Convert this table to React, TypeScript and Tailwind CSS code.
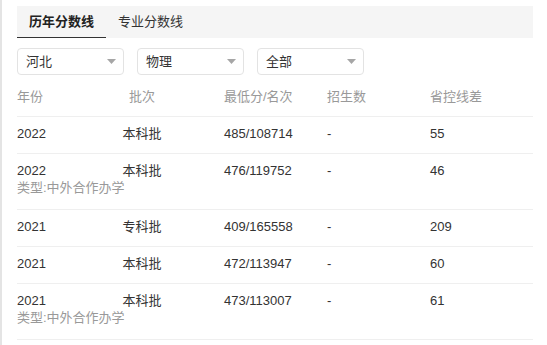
import React from 'react'

const rows = [
  { year: '2022', batch: '本科批', score: '485/108714', plan: '-', diff: '55' },
  { year: '2022', batch: '本科批', score: '476/119752', plan: '-', diff: '46', note: '类型:中外合作办学' },
  { year: '2021', batch: '专科批', score: '409/165558', plan: '-', diff: '209' },
  { year: '2021', batch: '本科批', score: '472/113947', plan: '-', diff: '60' },
  { year: '2021', batch: '本科批', score: '473/113007', plan: '-', diff: '61', note: '类型:中外合作办学' },
]

const cols = 'grid grid-cols-[43px_164px_103px_103px_1fr]'

function Select({ label }: { label: string }) {
  return (
    <div className="w-[107px] h-[27px] border border-[#e3e3e3] rounded-[4px] pl-[8px] pr-[7px] flex items-center justify-between text-[13px] text-[#333]">
      <span className="leading-[17px]">{label}</span>
      <svg width="9" height="5" viewBox="0 0 9 5">
        <path d="M0 0 L9 0 L4.5 5 Z" fill="#a6a6a6" />
      </svg>
    </div>
  )
}

export default function App() {
  return (
    <div
      className="h-[345px] w-full bg-white border-l-2 border-[#e4e4e4] pl-[15px] pr-[14px] pt-[6px] overflow-hidden"
      style={{ fontFamily: '"Liberation Sans", "Noto Sans CJK SC", sans-serif' }}
    >
      {/* Tabs */}
      <div className="flex h-[32px] bg-[#f5f5f5] text-[13px]">
        <div className="px-[12px] flex items-center font-bold text-[#222] border-b border-[#333]">历年分数线</div>
        <div className="px-[12px] flex items-center text-[#333]">专业分数线</div>
      </div>

      {/* Filters */}
      <div className="mt-[10px] flex gap-[13px]">
        <Select label="河北" />
        <Select label="物理" />
        <Select label="全部" />
      </div>

      {/* Table header */}
      <div className={`${cols} h-[42px] pt-[13px] leading-[18px] text-[13px] text-[#999] border-b border-[#efefef]`}>
        <div>年份</div>
        <div className="text-center">批次</div>
        <div>最低分/名次</div>
        <div>招生数</div>
        <div>省控线差</div>
      </div>

      {/* Rows */}
      {rows.map((r, i) => (
        <div key={i} className={`pt-[8px] ${r.note ? 'pb-[13px]' : 'pb-[11px]'} border-b border-[#efefef] text-[13px]`}>
          <div className={`${cols} leading-[17px] text-[#333]`}>
            <div>{r.year}</div>
            <div className="text-center">{r.batch}</div>
            <div>{r.score}</div>
            <div>{r.plan}</div>
            <div>{r.diff}</div>
          </div>
          {r.note && <div className="leading-[17px] text-[#999]">{r.note}</div>}
        </div>
      ))}
    </div>
  )
}
